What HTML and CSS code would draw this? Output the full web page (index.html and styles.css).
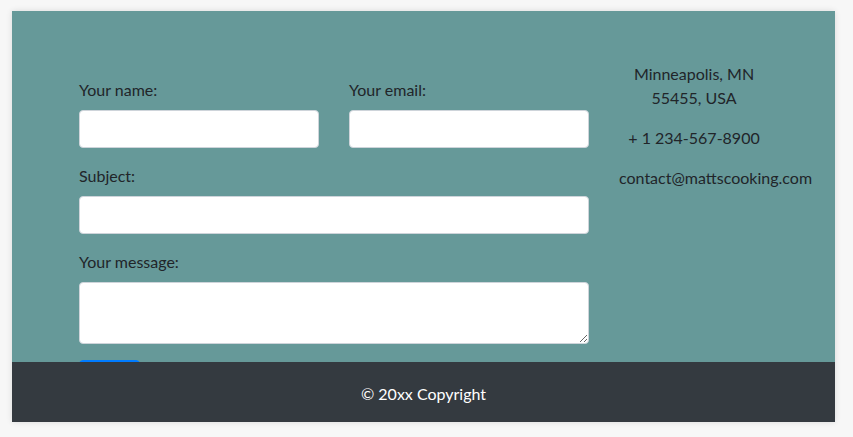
FILE: index.html
```html
<!DOCTYPE html>
<html lang="en">
<head>
<meta charset="utf-8">
<title>Contact</title>
<link rel="stylesheet" href="styles.css">
</head>
<body>
<div class="card">
  <section class="contact">
    <form class="contact-form">
      <div class="row">
        <div class="form-group">
          <label for="name">Your name:</label>
          <input id="name" type="text" class="form-control">
        </div>
        <div class="form-group">
          <label for="email">Your email:</label>
          <input id="email" type="email" class="form-control">
        </div>
      </div>
      <div class="form-group">
        <label for="subject">Subject:</label>
        <input id="subject" type="text" class="form-control">
      </div>
      <div class="form-group">
        <label for="message">Your message:</label>
        <textarea id="message" rows="2" class="form-control textarea"></textarea>
      </div>
      <button type="submit" class="btn">Send</button>
    </form>
    <div class="contact-info">
      <p>Minneapolis, MN<br>55455, USA</p>
      <p>+ 1 234-567-8900</p>
      <p>contact@mattscooking.com</p>
    </div>
  </section>
  <footer class="footer">© 20xx Copyright</footer>
</div>
</body>
</html>
```

FILE: styles.css
```css
* { box-sizing: border-box; }
html, body { margin: 0; }
body {
  background: #f7f7f7;
  padding: 11px 18px 15px 12px;
  font-family: Lato, "Open Sans", sans-serif;
  font-size: 16px;
  line-height: 24px;
  color: #212529;
}
.card {
  height: 411px;
  display: flex;
  flex-direction: column;
  box-shadow: 0 0 6px rgba(0,0,0,0.12);
  overflow: hidden;
}
.contact {
  flex: 1;
  min-height: 0;
  overflow: hidden;
  background: #669999;
  display: flex;
  gap: 30px;
  padding: 51px 0 0 67px;
}
.contact-form {
  width: 510px;
  flex: none;
  padding-top: 16px;
}
.row {
  display: flex;
  gap: 30px;
}
.row .form-group { flex: 1; }
.form-group { margin-bottom: 16px; }
label {
  display: block;
  margin-bottom: 8px;
}
.form-control {
  display: block;
  width: 100%;
  height: 38px;
  padding: 6px 12px;
  font: inherit;
  background: #fff;
  border: 1px solid #ced4da;
  border-radius: 4px;
  margin: 0;
}
.textarea {
  height: 62px;
  resize: vertical;
}
.btn {
  display: inline-block;
  font: inherit;
  color: #fff;
  background: #007bff;
  border: 1px solid #007bff;
  border-radius: 4px;
  padding: 6px 12px;
  margin: 0;
}
.contact-info {
  width: 150px;
  flex: none;
  text-align: center;
  white-space: nowrap;
}
.contact-info p {
  margin: 0 0 16px;
}
.footer {
  height: 60px;
  flex: none;
  background: #343a40;
  color: #fff;
  text-align: center;
  padding-top: 20px;
}
```
